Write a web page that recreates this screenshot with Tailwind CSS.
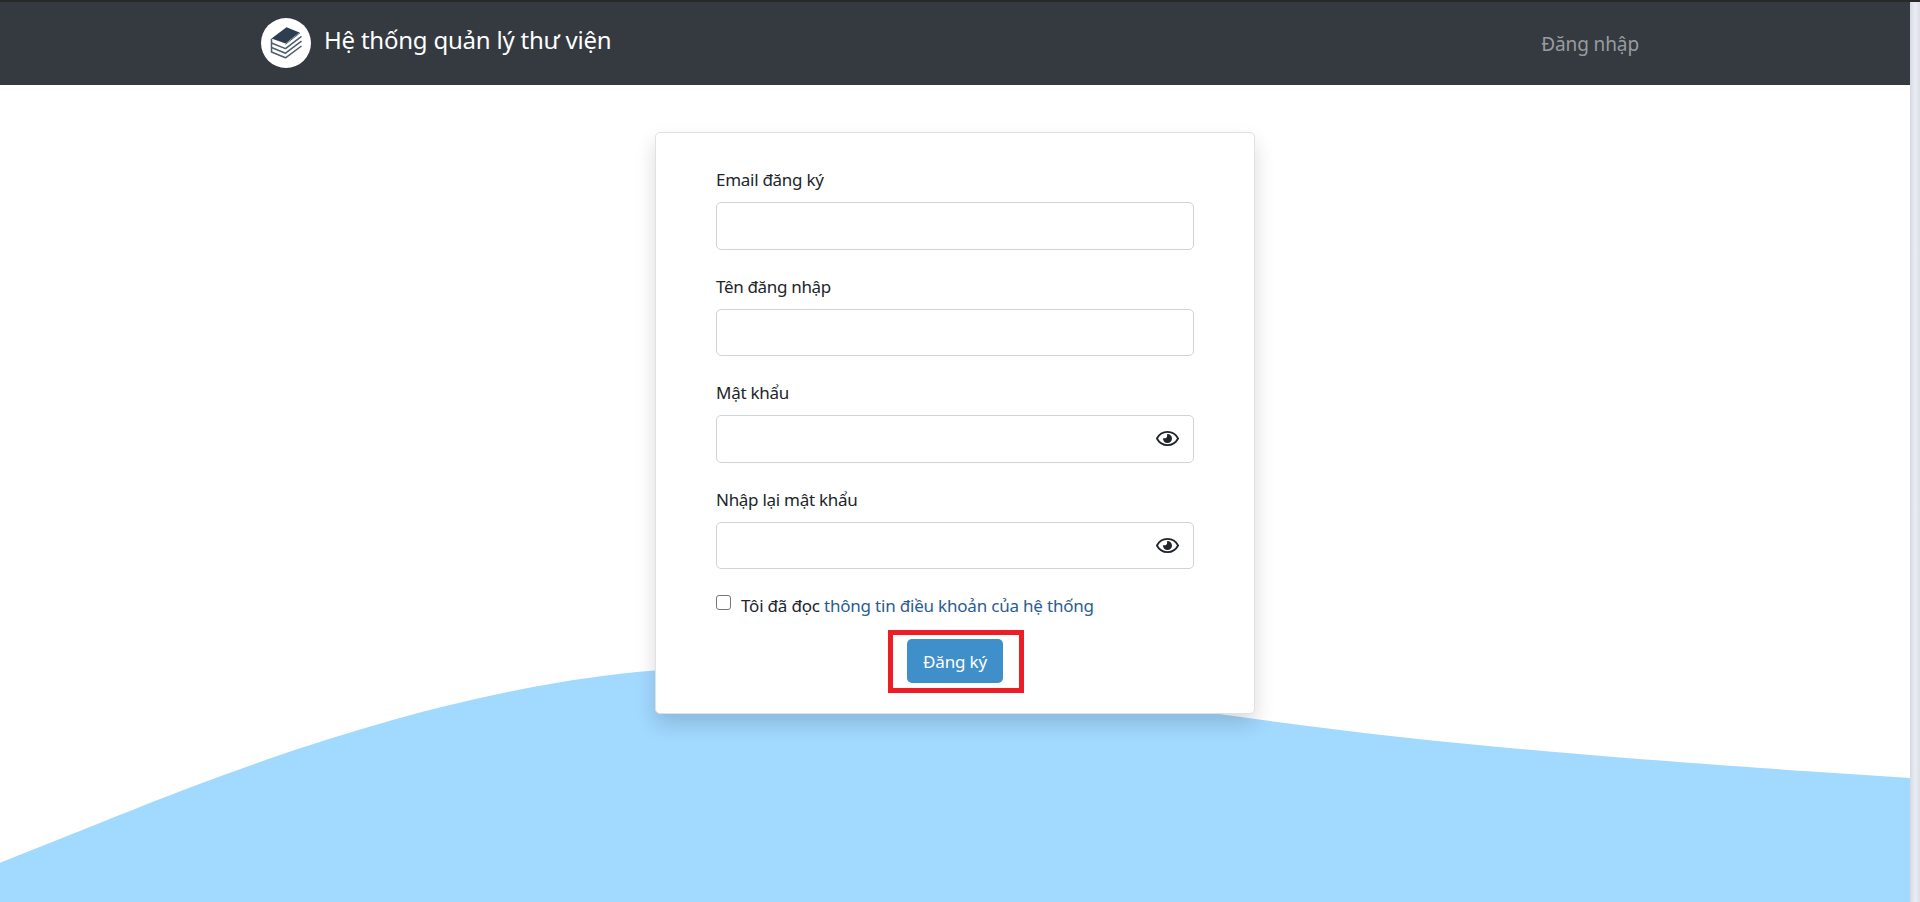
<!DOCTYPE html>
<html lang="vi">
<head>
<meta charset="utf-8">
<title>Hệ thống quản lý thư viện</title>
<script src="https://cdn.jsdelivr.net/npm/@tailwindcss/browser@4"></script>
</head>
<body class="relative flex h-[902px] w-[1920px] flex-col overflow-hidden bg-white font-['Noto_Sans','Open_Sans',sans-serif] text-[#212529]">
<div class="h-[2px] w-full shrink-0 bg-[#282828]"></div>
<div class="flex min-h-0 flex-1">
  <div class="relative flex w-[1910px] flex-col overflow-hidden">
    <svg class="absolute left-0 top-[564px] h-[424px] w-[1910px]" viewBox="0 0 1440 320" preserveAspectRatio="none"><path fill="#a2d9ff" d="M0,224L80,192C160,160,320,96,480,80C640,64,800,96,960,117.3C1120,139,1280,149,1360,154.7L1440,160L1440,320L0,320Z"/></svg>
    <header class="relative flex h-[83px] shrink-0 items-center justify-between bg-[#343a40] pl-[261px] pr-[271px]">
      <a class="flex h-[50px] items-center gap-[13px] pb-px text-white">
        <svg class="size-[50px] shrink-0" viewBox="0 0 50 50">
          <circle cx="25" cy="25" r="25" fill="#fff"/>
          <path d="M10.5 20.5 25.5 9.3 38.5 14.5 24.5 25.600Z" fill="#2c3e50"/>
          <g fill="none" stroke="#4e5d6c" stroke-width="1.500" stroke-linejoin="round"><path d="M10.500 20.800V34L24.500 39.800 40.500 28"/><path d="M10.500 25 24.500 30.600 40.500 18.300"/><path d="M10.500 29.500 24.500 35.200 40.500 23.200"/><path d="M24.500 26.300 39 14.800" stroke-width="1"/></g>
        </svg>
        <span class="whitespace-nowrap pb-[7px] text-[24px] leading-[38px] tracking-[-0.22px]">Hệ thống quản lý thư viện</span>
      </a>
      <a class="whitespace-nowrap pt-px text-[19px] leading-[30px] tracking-[-0.1px] text-[#999c9f]">Đăng nhập</a>
    </header>
    <form class="relative mt-[47px] ml-[655px] flex h-[582px] w-[600px] flex-col rounded-[5px] border border-[#dee2e6] bg-white px-[60px] pt-[32px] shadow-[0_10px_20px_rgba(0,0,0,0.15)]">
      <label class="flex h-[107px] flex-col text-[17px] leading-[29px] tracking-[-0.28px]"><span class="h-[37px]">Email đăng ký</span><input class="h-[48px] w-[478px] rounded-[5px] border border-[#ced4da]"></label>
      <label class="flex h-[106px] flex-col text-[17px] leading-[29px] tracking-[-0.33px]"><span class="h-[37px]">Tên đăng nhập</span><input class="h-[47px] w-[478px] rounded-[5px] border border-[#ced4da]"></label>
      <label class="flex h-[107px] flex-col text-[17px] leading-[29px] tracking-[-0.28px]"><span class="h-[37px]">Mật khẩu</span>
        <span class="flex h-[48px] w-[478px] items-center justify-end rounded-[5px] border border-[#ced4da] pr-[14px]"><svg class="mb-[2px] h-[15px] w-[23px]" viewBox="0 0 23 15" fill="none"><path d="M.9 7.500C3 3.500 7 .9 11.500 .9S20 3.500 22.100 7.500C20 11.500 16 14.100 11.500 14.100S3 11.500 .9 7.500Z" stroke="#212529" stroke-width="1.800"/><path d="M11.200 3.100A4.500 4.500 0 1 1 7 7.300L9.600 7.200 11 6Z" fill="#212529"/></svg></span></label>
      <label class="flex h-[106px] flex-col text-[17px] leading-[29px] tracking-[-0.28px]"><span class="h-[37px]">Nhập lại mật khẩu</span>
        <span class="flex h-[47px] w-[478px] items-center justify-end rounded-[5px] border border-[#ced4da] pr-[14px]"><svg class="mb-[1px] h-[15px] w-[23px]" viewBox="0 0 23 15" fill="none"><path d="M.9 7.500C3 3.500 7 .9 11.500 .9S20 3.500 22.100 7.500C20 11.500 16 14.100 11.500 14.100S3 11.500 .9 7.500Z" stroke="#212529" stroke-width="1.800"/><path d="M11.200 3.100A4.500 4.500 0 1 1 7 7.300L9.600 7.200 11 6Z" fill="#212529"/></svg></span></label>
      <label class="flex h-[48px] items-start text-[17px] leading-[29px] tracking-[-0.2px]"><input type="checkbox" class="mr-[10px] mt-[4px] size-[15px] appearance-none rounded-[3px] border border-[#767676] bg-white"><span class="whitespace-nowrap">Tôi đã đọc <a class="text-[#2a5d93]">thông tin điều khoản của hệ thống</a></span></label>
      <button type="button" class="relative ml-[191px] flex h-[44px] w-[96px] items-center justify-center whitespace-nowrap rounded-[5px] bg-[#3f8fca] pt-px text-[17px] tracking-[-0.15px] text-white">Đăng ký<span class="absolute -left-[19px] -top-[9px] h-[63px] w-[136px] border-[5px] border-[#ee1c25]"></span></button>
    </form>
  </div>
  <div class="w-[10px] bg-linear-to-r from-[#d5d8e3] via-[#ebedf3] to-[#dcdfe8]"></div>
</div>
</body>
</html>
